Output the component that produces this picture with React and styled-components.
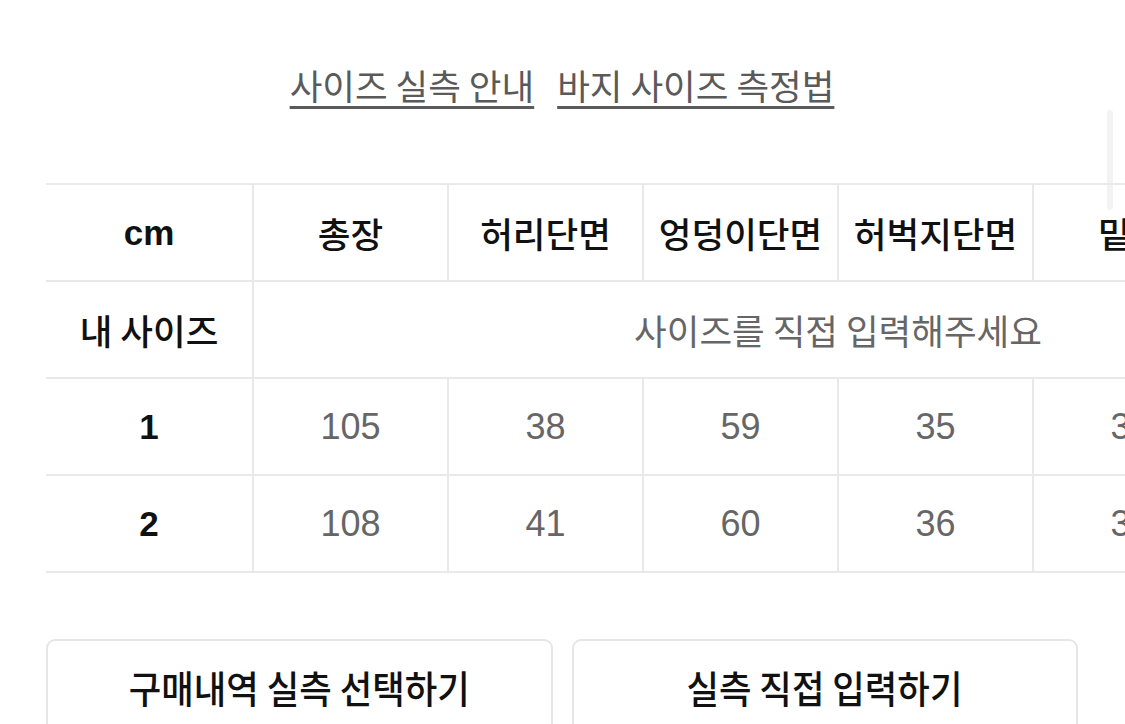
import styled, { createGlobalStyle } from "styled-components";

const GlobalStyle = createGlobalStyle`
    html, body {
        margin: 0;
        padding: 0;
        background: #fff;
        overflow: hidden;
    }
    body {
        font-family: "Liberation Sans", "Noto Sans CJK KR", sans-serif;
        color: #111;
    }
`

const columns = ['총장', '허리단면', '엉덩이단면', '허벅지단면', '밑위', '밑단단면']
const rows = [
    { label: '1', values: [105, 38, 59, 35, 30, 21] },
    { label: '2', values: [108, 41, 60, 36, 31, 22] },
]

const App = () => {
    return (
        <Page>
            <GlobalStyle />
            <ScrollThumb />
            <GuideLinks>
                <GuideLink href="#">사이즈 실측 안내</GuideLink>
                <GuideLink href="#">바지 사이즈 측정법</GuideLink>
            </GuideLinks>

            <TableScroll>
                <SizeTable>
                    <colgroup>
                        <col style={{ width: 207 }} />
                        {columns.map((c) => <col key={c} style={{ width: 195 }} />)}
                    </colgroup>
                    <tbody>
                        <tr>
                            <HeadCell $latin>cm</HeadCell>
                            {columns.map((c) => <HeadCell key={c}>{c}</HeadCell>)}
                        </tr>
                        <tr>
                            <HeadCell>내 사이즈</HeadCell>
                            <Cell colSpan={columns.length}>사이즈를 직접 입력해주세요</Cell>
                        </tr>
                        {rows.map((r) => (
                            <tr key={r.label}>
                                <HeadCell $latin>{r.label}</HeadCell>
                                {r.values.map((v, i) => <Cell key={i} $num>{v}</Cell>)}
                            </tr>
                        ))}
                    </tbody>
                </SizeTable>
            </TableScroll>

            <ButtonRow>
                <ActionButton><Label>구매내역 실측 선택하기</Label></ActionButton>
                <ActionButton><Label>실측 직접 입력하기</Label></ActionButton>
            </ButtonRow>
        </Page>
    )
}

export default App;

const Page = styled.div`
    position: relative;
    width: 1125px;
    height: 724px;
    padding: 0 47px 0 46px;
    box-sizing: border-box;
    overflow: hidden;
`
const ScrollThumb = styled.div`
    position: absolute;
    top: 110px;
    left: 1107px;
    width: 6px;
    height: 100px;
    border-radius: 3px;
    background: #f3f3f3;
`
const GuideLinks = styled.div`
    display: flex;
    justify-content: center;
    gap: 23px;
    padding-top: 62px;
    height: 124px;
    box-sizing: border-box;
`
const GuideLink = styled.a`
    font-family: "Noto Sans CJK KR", sans-serif;
    font-size: 35.5px;
    line-height: 46px;
    color: #5a5a5a;
    text-decoration: underline;
    text-decoration-thickness: 3px;
    text-underline-offset: 6px;
`
const TableScroll = styled.div`
    position: relative;
    margin-top: 59px;
    margin-right: -47px;
    overflow: hidden;
`
const SizeTable = styled.table`
    border-collapse: collapse;
    table-layout: fixed;
    width: 1377px;
`
const baseCell = `
    height: 95px;
    padding: 0;
    text-align: center;
    vertical-align: middle;
    border: 2px solid #e9e9e9;
    white-space: nowrap;
    overflow: hidden;
`
const HeadCell = styled.td`
    ${baseCell}
    border-left: none;
    color: #111;
    font-family: ${(p) => p.$latin ? '"Liberation Sans", sans-serif' : '"Noto Sans CJK KR", sans-serif'};
    font-size: ${(p) => p.$latin ? '35px' : '35.5px'};
    font-weight: ${(p) => p.$latin ? 700 : 500};
`
const Cell = styled.td`
    ${baseCell}
    color: #666;
    font-family: ${(p) => p.$num ? '"Liberation Sans", sans-serif' : '"Noto Sans CJK KR", sans-serif'};
    font-size: ${(p) => p.$num ? '36px' : '35.5px'};
    font-weight: 400;
`
const ButtonRow = styled.div`
    display: grid;
    grid-template-columns: 1fr 1fr;
    gap: 19px;
    margin-top: 66px;
`
const ActionButton = styled.button`
    height: 100px;
    background: #fff;
    border: 2px solid #e6e6e6;
    border-radius: 9px;
    display: flex;
    justify-content: center;
    padding-top: 21px;
    font-family: "Noto Sans CJK KR", sans-serif;
    color: #111;
    cursor: pointer;
`
const Label = styled.span`
    font-size: 38px;
    font-weight: 500;
    line-height: 50px;
    transform: scaleX(0.93);
    white-space: nowrap;
`
